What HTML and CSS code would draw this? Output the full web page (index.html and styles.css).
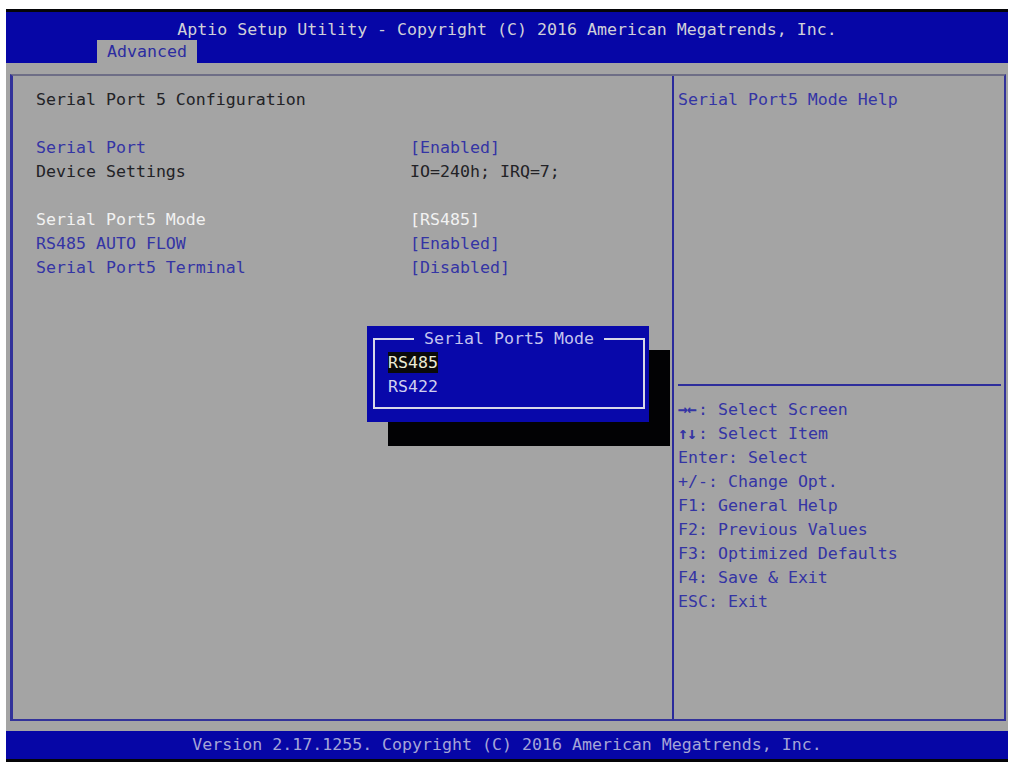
FILE: index.html
```html
<!DOCTYPE html>
<html>
<head>
<meta charset="utf-8">
<title>Aptio Setup Utility</title>
<link rel="stylesheet" href="styles.css">
</head>
<body>
<div class="screen">
  <div class="header">
    <div class="title">Aptio Setup Utility - Copyright (C) 2016 American Megatrends, Inc.</div>
    <div class="tabs"><span class="tab">Advanced</span></div>
  </div>
  <div class="body">
    <div class="frame">
      <div class="main">
        <div class="grid">
          <div class="row-full dark">Serial Port 5 Configuration</div>
          <div class="row-full"></div>
          <div class="blue">Serial Port</div><div class="blue">[Enabled]</div>
          <div class="dark">Device Settings</div><div class="dark">IO=240h; IRQ=7;</div>
          <div class="row-full"></div>
          <div class="white">Serial Port5 Mode</div><div class="white">[RS485]</div>
          <div class="blue">RS485 AUTO FLOW</div><div class="blue">[Enabled]</div>
          <div class="blue">Serial Port5 Terminal</div><div class="blue">[Disabled]</div>
        </div>
      </div>
      <div class="side">
        <div class="help">
          <div class="blue">Serial Port5 Mode Help</div>
        </div>
        <div class="sep"></div>
        <ul class="keys">
          <li><span class="arr">→←</span>: Select Screen</li>
          <li><span class="arr">↑↓</span>: Select Item</li>
          <li>Enter: Select</li>
          <li>+/-: Change Opt.</li>
          <li>F1: General Help</li>
          <li>F2: Previous Values</li>
          <li>F3: Optimized Defaults</li>
          <li>F4: Save &amp; Exit</li>
          <li>ESC: Exit</li>
        </ul>
      </div>
    </div>
  </div>
  <div class="footer">Version 2.17.1255. Copyright (C) 2016 American Megatrends, Inc.</div>

  <div class="popup">
    <div class="popup-box">
      <div class="popup-title"><span>Serial Port5 Mode</span></div>
      <div class="opt"><span class="sel">RS485</span></div>
      <div class="opt"><span>RS422</span></div>
    </div>
  </div>
</div>
</body>
</html>
```
FILE: styles.css
```css
html, body {
  margin: 0;
  padding: 0;
  background: #ffffff;
}

body {
  font-family: "DejaVu Sans Mono", "Liberation Mono", monospace;
  font-size: 16.6px;
}

.screen {
  position: relative;
  width: 1002px;
  margin: 9px 0 0 6px;
  background: #a4a4a4;
}

.header {
  background: #0606a6;
  border-top: 3px solid #050508;
  height: 51px;
  display: flex;
  flex-direction: column;
}

.title {
  padding-top: 8px;
  line-height: 20px;
  height: 20px;
  text-align: center;
  color: #d0d0d8;
}

.tabs {
  display: flex;
  height: 23px;
  padding-left: 91px;
}

.tab {
  background: #a4a4a4;
  color: #2c2ca0;
  line-height: 23px;
  padding: 0 10px 0 10px;
}

.body {
  padding: 11px 2px 10px 4px;
}

.frame {
  height: 643px;
  border: 2px solid #32329a;
  border-top-color: #6e6e86;
  border-left-width: 3px;
  display: flex;
}

.main {
  width: 661px;
  border-right: 2px solid #2a2a9c;
  padding: 12px 0 0 23px;
  box-sizing: border-box;
}

.grid {
  display: grid;
  grid-template-columns: 374px auto;
  grid-auto-rows: 24px;
  line-height: 24px;
}

.row-full {
  grid-column: 1 / span 2;
}

.dark { color: #222226; }
.blue { color: #3434a4; }
.white { color: #f2f2f2; }

.side {
  flex: 1;
  display: flex;
  flex-direction: column;
}

.help {
  height: 308px;
  box-sizing: border-box;
  padding: 12px 0 0 4px;
  line-height: 24px;
}

.sep {
  height: 2px;
  background: #2e2e9c;
  margin: 0 3px 0 4px;
}

.keys {
  list-style: none;
  margin: 0;
  padding: 12px 0 0 4px;
  line-height: 24px;
  color: #3434a4;
}

.arr {
  font-weight: bold;
  letter-spacing: -1px;
  display: inline-block;
  width: 20px;
}

.footer {
  background: #0606a6;
  border-bottom: 3px solid #050508;
  height: 28px;
  line-height: 28px;
  text-align: center;
  color: #a4a4d8;
}

.popup {
  position: absolute;
  left: 361px;
  top: 317px;
  width: 282px;
  height: 96px;
  background: #0808aa;
  box-shadow: 21px 24px 0 #020204;
  box-sizing: border-box;
  padding: 13px 4px 13px 6px;
}

.popup-box {
  height: 100%;
  border: 2px solid #d8d8e8;
  border-top: none;
  box-sizing: border-box;
  position: relative;
  padding: 12px 0 0 13px;
}

.popup-title {
  position: absolute;
  left: -2px;
  right: -2px;
  top: -12px;
  height: 24px;
  line-height: 24px;
  text-align: center;
  display: flex;
  align-items: center;
}

.popup-title::before,
.popup-title::after {
  content: "";
  flex: 1;
  height: 2px;
  background: #d8d8e8;
}

.popup-title span {
  color: #c4c4ee;
  padding: 0 10px 0 10px;
}

.opt {
  height: 24px;
  line-height: 24px;
  color: #d0d0ee;
}

.opt .sel {
  display: inline-block;
  line-height: 21px;
  background: #0a0a0a;
  color: #ececd6;
}
```
